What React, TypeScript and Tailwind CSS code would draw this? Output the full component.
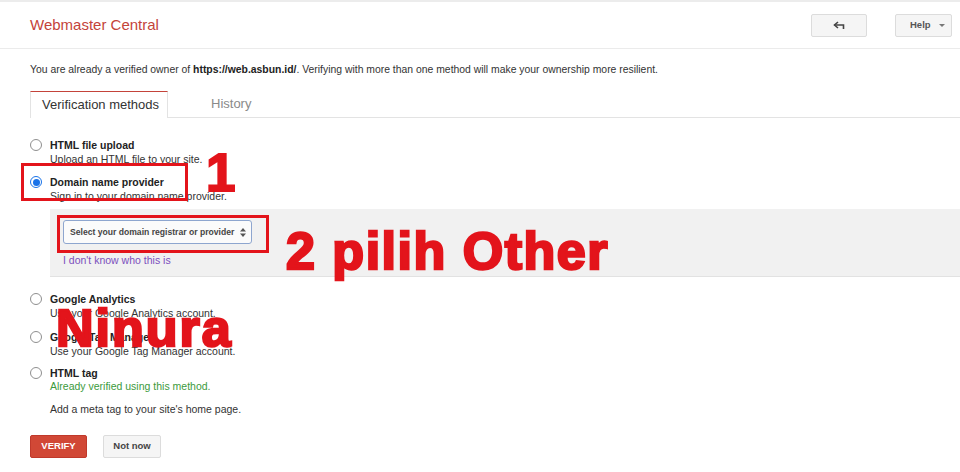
const font = "font-['Liberation_Sans',Arial,sans-serif]";

type Method = {
  id: string;
  label: string;
  desc: string;
  checked?: boolean;
};

function Radio({ checked }: { checked?: boolean }) {
  if (checked) {
    return (
      <span className="mt-[1px] flex h-[12px] w-[12px] items-center justify-center rounded-full border border-[#1a73e8] bg-white">
        <span className="block h-[7px] w-[7px] rounded-full bg-[#1a73e8]" />
      </span>
    );
  }
  return <span className="mt-[1px] block h-[12px] w-[12px] rounded-full border border-[#8f8f8f] bg-white" />;
}

function MethodRow({ m, children }: { m: Method; children?: React.ReactNode }) {
  return (
    <div className="flex flex-col">
      <div className="flex">
        <div className="w-[20px] shrink-0">
          <Radio checked={m.checked} />
        </div>
        <div className="flex flex-col text-[10.5px] leading-[14px]">
          <span className="font-bold text-[#222]">{m.label}</span>
          <span className="text-[#333]">{m.desc}</span>
        </div>
      </div>
      {children}
    </div>
  );
}

export default function App() {
  return (
    <div className={`relative h-[472px] w-[960px] overflow-hidden bg-white ${font}`}>
      <div className="h-[2px] bg-[#ececec]" />
      <header className="flex h-[47px] items-center justify-between border-b border-[#ebebeb] pl-[30px] pr-[8px]">
        <h1 className="text-[15px] text-[#c4433a]">Webmaster Central</h1>
        <div className="flex items-center gap-[28px]">
          <button className="flex h-[23px] w-[56px] items-center justify-center rounded-[2px] border border-[#dcdcdc] bg-[#f5f5f5] text-[#444]">
            <svg width="12" height="9" viewBox="0 0 12 9" fill="none" stroke="#444" strokeWidth="1.6">
              <path d="M5 1 L1.5 4 L5 7" />
              <path d="M1.5 4 H10.5 V8" />
            </svg>
          </button>
          <button className="flex h-[23px] w-[57px] items-center justify-between rounded-[2px] border border-[#dcdcdc] bg-[#f5f5f5] pl-[14px] pr-[6px] text-[9.5px] font-bold text-[#555]">
            Help
            <span className="h-0 w-0 border-x-[3px] border-t-[3px] border-x-transparent border-t-[#777]" />
          </button>
        </div>
      </header>

      <div className="pl-[30px]">
        <p className="mt-[14px] text-[10.4px] leading-[14px] text-[#333]">
          You are already a verified owner of <b className="text-[#222]">https://web.asbun.id/</b>. Verifying with more
          than one method will make your ownership more resilient.
        </p>

        <div className="mt-[14px] flex h-[27px] border-b border-[#e3e3e3]">
          <div className="-mb-px flex h-[27px] w-[138px] items-center border-x border-t border-x-[#e3e3e3] border-t-[#c4433a] bg-white pl-[11px] text-[13px] text-[#333]">
            Verification methods
          </div>
          <div className="flex items-center pl-[43px] text-[13px] text-[#8a8a8a]">History</div>
        </div>

        <div className="mt-[20px] flex flex-col">
          <MethodRow m={{ id: "file", label: "HTML file upload", desc: "Upload an HTML file to your site." }} />
          <div className="mt-[9px]">
            <MethodRow
              m={{ id: "dns", label: "Domain name provider", desc: "Sign in to your domain name provider.", checked: true }}
            >
              <div className="ml-[20px] mt-[6px] flex h-[68px] flex-col border-b border-[#e2e2e2] bg-[#f1f1f1] pl-[13px] pt-[11px]">
                <div className="flex h-[24px] w-[189px] items-center justify-between whitespace-nowrap rounded-[3px] border border-[#8ea6cf] bg-[#fbfbfb] pl-[6px] pr-[5px] text-[8.6px] font-bold text-[#444]">
                  Select your domain registrar or provider
                  <svg width="6" height="9" viewBox="0 0 6 9" fill="#555">
                    <path d="M3 0 L6 3.5 H0 Z" />
                    <path d="M3 9 L6 5.5 H0 Z" />
                  </svg>
                </div>
                <span className="mt-[9px] text-[10.5px] leading-[14px] text-[#7b4fbd]">I don't know who this is</span>
              </div>
            </MethodRow>
          </div>
          <div className="mt-[15px]">
            <MethodRow m={{ id: "ga", label: "Google Analytics", desc: "Use your Google Analytics account." }} />
          </div>
          <div className="mt-[10px]">
            <MethodRow m={{ id: "gtm", label: "Google Tag Manager", desc: "Use your Google Tag Manager account." }} />
          </div>
          <div className="mt-[8px] flex">
            <div className="w-[20px] shrink-0">
              <Radio />
            </div>
            <div className="flex flex-col text-[10.5px] leading-[14px]">
              <span className="font-bold text-[#222]">HTML tag</span>
              <span className="-mt-px text-[#3c9a3c]">Already verified using this method.</span>
              <span className="mt-[9px] text-[#333]">Add a meta tag to your site's home page.</span>
            </div>
          </div>
        </div>

        <div className="mt-[19px] flex gap-[16px]">
          <button className="flex h-[23px] w-[57px] items-center justify-center rounded-[2px] border border-[#c0392b] bg-[#d14836] text-[9.5px] font-bold text-white">
            VERIFY
          </button>
          <button className="flex h-[23px] w-[58px] items-center justify-center rounded-[2px] border border-[#dcdcdc] bg-[#f5f5f5] text-[9.5px] font-bold text-[#444]">
            Not now
          </button>
        </div>
      </div>

      {/* red annotations drawn over the screenshot */}
      <div className="absolute left-[21px] top-[163px] h-[38px] w-[167px] border-[3px] border-[#e3141b]" />
      <div className="absolute left-[57px] top-[215px] h-[38px] w-[212px] border-[3px] border-[#e3141b]" />
      <span className="absolute left-[206px] top-[146px] text-[53px] font-bold leading-none text-[#e3141b] [-webkit-text-stroke:2px_#e3141b]">
        1
      </span>
      <span className="absolute left-[286px] top-[225px] text-[52px] font-bold leading-none tracking-[1.5px] text-[#e3141b] [-webkit-text-stroke:2.5px_#e3141b]">
        2 pilih Other
      </span>
      <span className="absolute left-[56px] top-[302px] text-[52px] font-bold leading-none tracking-[2px] text-[#e3141b] [-webkit-text-stroke:2.5px_#e3141b]">
        Ninura
      </span>
    </div>
  );
}
